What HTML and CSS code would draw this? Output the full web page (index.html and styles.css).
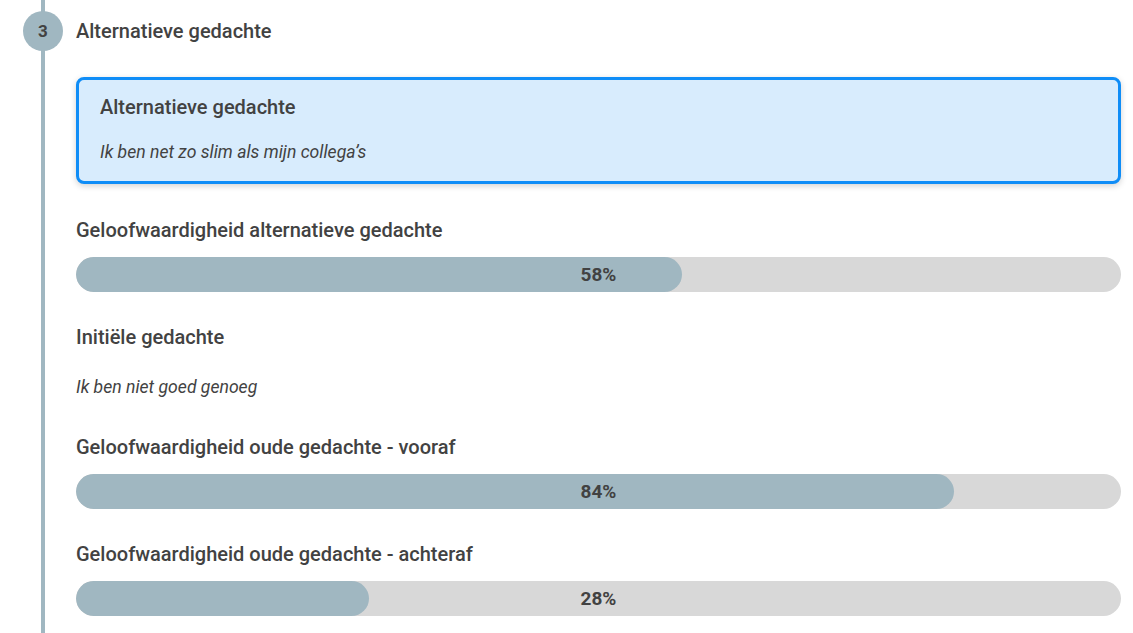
FILE: index.html
```html
<!DOCTYPE html>
<html lang="nl">
<head>
<meta charset="UTF-8">
<meta name="viewport" content="width=device-width, initial-scale=1.0">
<title>Stap 3 - Alternatieve gedachte</title>
<link rel="stylesheet" href="styles.css">
</head>
<body>
<div class="step">
    <div class="rail">
        <div class="step-number">3</div>
    </div>
    <div class="step-content">
        <div class="step-header">
            <h2>Alternatieve gedachte</h2>
        </div>

        <div class="thought-card">
            <h3>Alternatieve gedachte</h3>
            <p class="thought">Ik ben net zo slim als mijn collega’s</p>
        </div>

        <h3 class="label">Geloofwaardigheid alternatieve gedachte</h3>
        <div class="bar">
            <div class="bar-fill" style="width: 58%"></div>
            <span class="bar-value">58%</span>
        </div>

        <h3 class="label label-gap">Initiële gedachte</h3>
        <p class="thought plain">Ik ben niet goed genoeg</p>

        <h3 class="label label-after-text">Geloofwaardigheid oude gedachte - vooraf</h3>
        <div class="bar">
            <div class="bar-fill" style="width: 84%"></div>
            <span class="bar-value">84%</span>
        </div>

        <h3 class="label label-gap">Geloofwaardigheid oude gedachte - achteraf</h3>
        <div class="bar">
            <div class="bar-fill" style="width: 28%"></div>
            <span class="bar-value">28%</span>
        </div>
    </div>
</div>
</body>
</html>
```

FILE: styles.css
```css
html, body {
    margin: 0;
    padding: 0;
    background: #fff;
    font-family: Roboto, "Noto Sans", Arial, sans-serif;
    color: #424242;
}
.step {
    display: grid;
    grid-template-columns: 40px 1fr;
    column-gap: 13px;
    padding: 0 12px 0 23px;
    min-height: 633px;
}
.rail {
    background: linear-gradient(#a0b7c1, #a0b7c1) center top / 4px 100% no-repeat;
    padding-top: 11px;
}
.step-number {
    width: 40px;
    height: 40px;
    border-radius: 50%;
    background-color: #a0b7c1;
    color: #424242;
    font-size: 17px;
    font-weight: 700;
    display: flex;
    align-items: center;
    justify-content: center;
}
.step-header {
    height: 40px;
    margin-top: 11px;
    display: flex;
    align-items: center;
}
h2, h3, p {
    margin: 0;
}
.step-header h2,
.thought-card h3,
.label {
    font-size: 20px;
    font-weight: 500;
    line-height: 22px;
}
.thought-card {
    margin-top: 26px;
    padding: 16px 21px 18px;
    background-color: #d8ecfd;
    border: 3px solid #0f8df7;
    border-radius: 8px;
    box-shadow: 0 2px 6px rgba(0, 0, 0, 0.18);
}
.thought {
    margin-top: 23px;
    font-size: 17.6px;
    font-style: italic;
    font-weight: 400;
    line-height: 22px;
}
.label {
    margin-top: 35px;
}
.label-gap {
    margin-top: 34px;
}
.label-after-text {
    margin-top: 38px;
}
.thought.plain {
    margin-top: 28px;
}
.bar {
    position: relative;
    height: 35px;
    margin-top: 16px;
    border-radius: 18px;
    background-color: #d8d8d8;
    overflow: hidden;
}
.bar-fill {
    height: 100%;
    border-radius: 18px;
    background-color: #a0b7c1;
}
.bar-value {
    position: absolute;
    inset: 0;
    display: flex;
    align-items: center;
    justify-content: center;
    font-size: 19px;
    font-weight: 700;
}
```
